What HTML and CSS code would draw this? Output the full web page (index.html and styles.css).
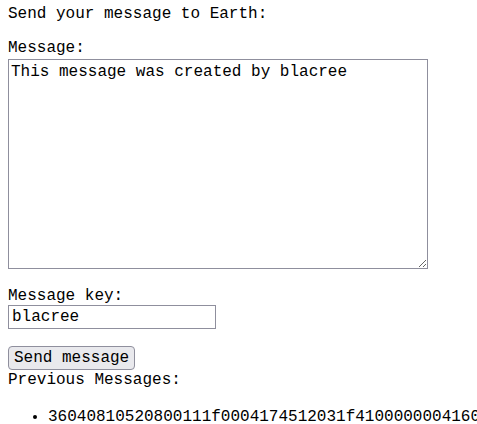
FILE: index.html
```html
<!DOCTYPE html>
<html>
<head>
<meta charset="utf-8">
<title>Send your message to Earth</title>
<link rel="stylesheet" href="styles.css">
</head>
<body>
<p class="intro">Send your message to Earth:</p>
<form class="send-form">
  <label class="field-label" for="message">Message:</label>
  <textarea id="message" class="message-box">This message was created by blacree</textarea>
  <label class="field-label" for="key">Message key:</label>
  <input id="key" class="key-input" type="text" value="blacree">
  <button type="button" class="send-button">Send message</button>
</form>
<div class="previous-title">Previous Messages:</div>
<ul class="previous-list">
  <li>36040810520800111f0004174512031f4100000004160000e2a1000000b0c3f411d00</li>
</ul>
</body>
</html>
```

FILE: styles.css
```css
html {
  overflow: hidden;
}

body {
  margin: 0;
  padding: 5px 8px 0;
  font-family: "Liberation Mono", monospace;
  font-size: 16px;
  line-height: 18px;
  color: #000;
  background: #fff;
}

.intro {
  margin: 0 0 16px;
}

.send-form {
  margin: 0;
}

.field-label {
  display: block;
  height: 18px;
}

.message-box {
  display: block;
  box-sizing: border-box;
  width: 420px;
  height: 210px;
  margin: 2px 0 18px;
  padding: 3px 2px 2px;
  border: 1px solid #8f8f9d;
  font: inherit;
  color: #000;
  background: #fff;
}

.key-input {
  display: block;
  box-sizing: border-box;
  width: 208px;
  height: 24px;
  margin: 0 0 17px;
  padding: 0 3px;
  border: 1px solid #8f8f9d;
  font: inherit;
  color: #000;
  background: #fff;
}

.send-button {
  display: block;
  box-sizing: border-box;
  height: 24px;
  padding: 0 5px;
  border: 1px solid #8f8f9d;
  border-radius: 4px;
  background: #e9e9ed;
  font: inherit;
  color: #000;
}

.previous-title {
  margin-top: 1px;
}

.previous-list {
  margin: 19px 0 0;
  padding-left: 40px;
  white-space: nowrap;
}
```
